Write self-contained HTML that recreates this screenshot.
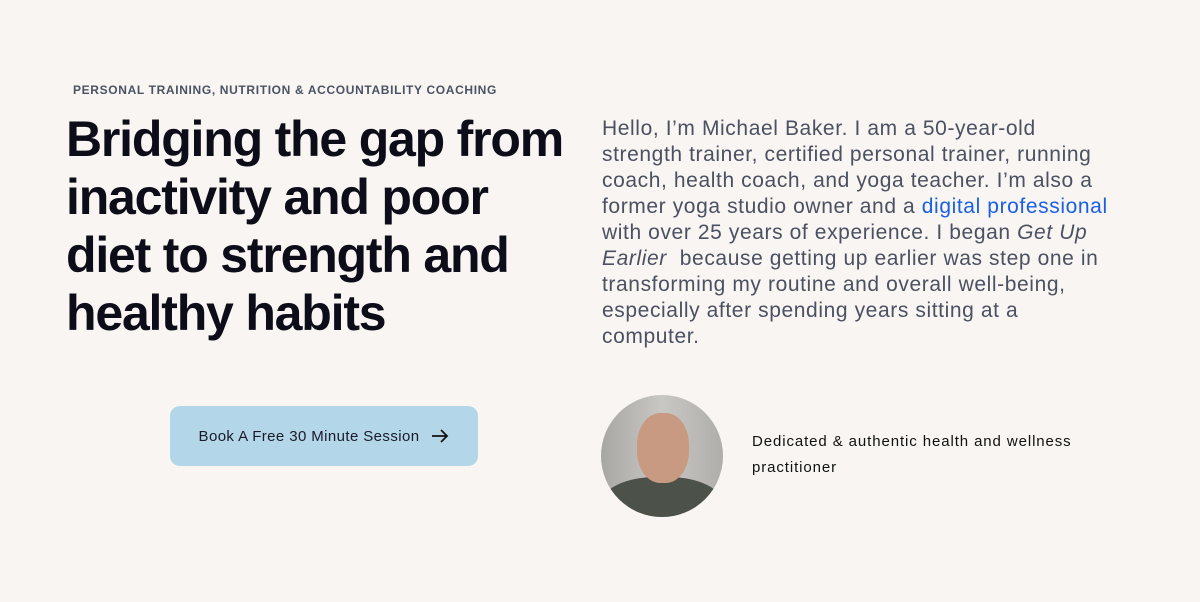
<!DOCTYPE html>
<html><head><meta charset="utf-8"><style>
body{margin:0;width:1200px;height:602px;background:#f8f5f2;font-family:"Liberation Sans",sans-serif;position:relative;overflow:hidden}
.k{position:absolute;left:73px;top:83px;font-size:12px;font-weight:bold;color:#4a5263;letter-spacing:.65px;white-space:nowrap}
h1{position:absolute;left:66px;top:110px;margin:0;font-size:50px;line-height:58px;font-weight:bold;color:#0d0d1a;letter-spacing:-1.2px;white-space:nowrap}
.p{position:absolute;left:602px;top:116px;font-size:21px;line-height:26px;color:#4b5161;letter-spacing:.6px;white-space:nowrap}
.p a{color:#1a5fe6;text-decoration:none}
.btn{position:absolute;left:170px;top:406px;width:308px;height:60px;background:#b3d7e8;border-radius:10px;font-size:15px;letter-spacing:.4px;color:#1a1a2a;display:flex;align-items:center;justify-content:center;gap:12px}
.av{position:absolute;left:601px;top:395px;width:122px;height:122px;border-radius:50%;background:linear-gradient(90deg,#a9a7a4,#c9c7c4 50%,#b0aeab);overflow:hidden}
.face{position:absolute;left:36px;top:18px;width:52px;height:70px;border-radius:45%;background:#c99a82}
.body{position:absolute;left:0;top:82px;width:122px;height:60px;border-radius:45% 45% 0 0;background:#4c524a}
.t{position:absolute;left:752px;top:429px;font-size:15px;line-height:26px;color:#111;letter-spacing:.9px;white-space:nowrap}
</style></head><body>
<div class="k">PERSONAL TRAINING, NUTRITION &amp; ACCOUNTABILITY COACHING</div>
<h1>Bridging the gap from<br>inactivity and poor<br>diet to strength and<br>healthy habits</h1>
<div class="p">Hello, I’m Michael Baker. I am a 50-year-old<br>strength trainer, certified personal trainer, running<br>coach, health coach, and yoga teacher. I’m also a<br>former yoga studio owner and a <a>digital professional</a><br>with over 25 years of experience. I began <i>Get Up</i><br><i>Earlier</i>&nbsp; because getting up earlier was step one in<br>transforming my routine and overall well-being,<br>especially after spending years sitting at a<br>computer.</div>
<div class="btn">Book A Free 30 Minute Session <svg width="18" height="14" viewBox="0 0 18 14"><path d="M1 7H16M10 1L16 7L10 13" fill="none" stroke="#111" stroke-width="1.8"/></svg></div>
<div class="av"><div class="body"></div><div class="face"></div></div>
<div class="t">Dedicated &amp; authentic health and wellness<br>practitioner</div>
</body></html>
